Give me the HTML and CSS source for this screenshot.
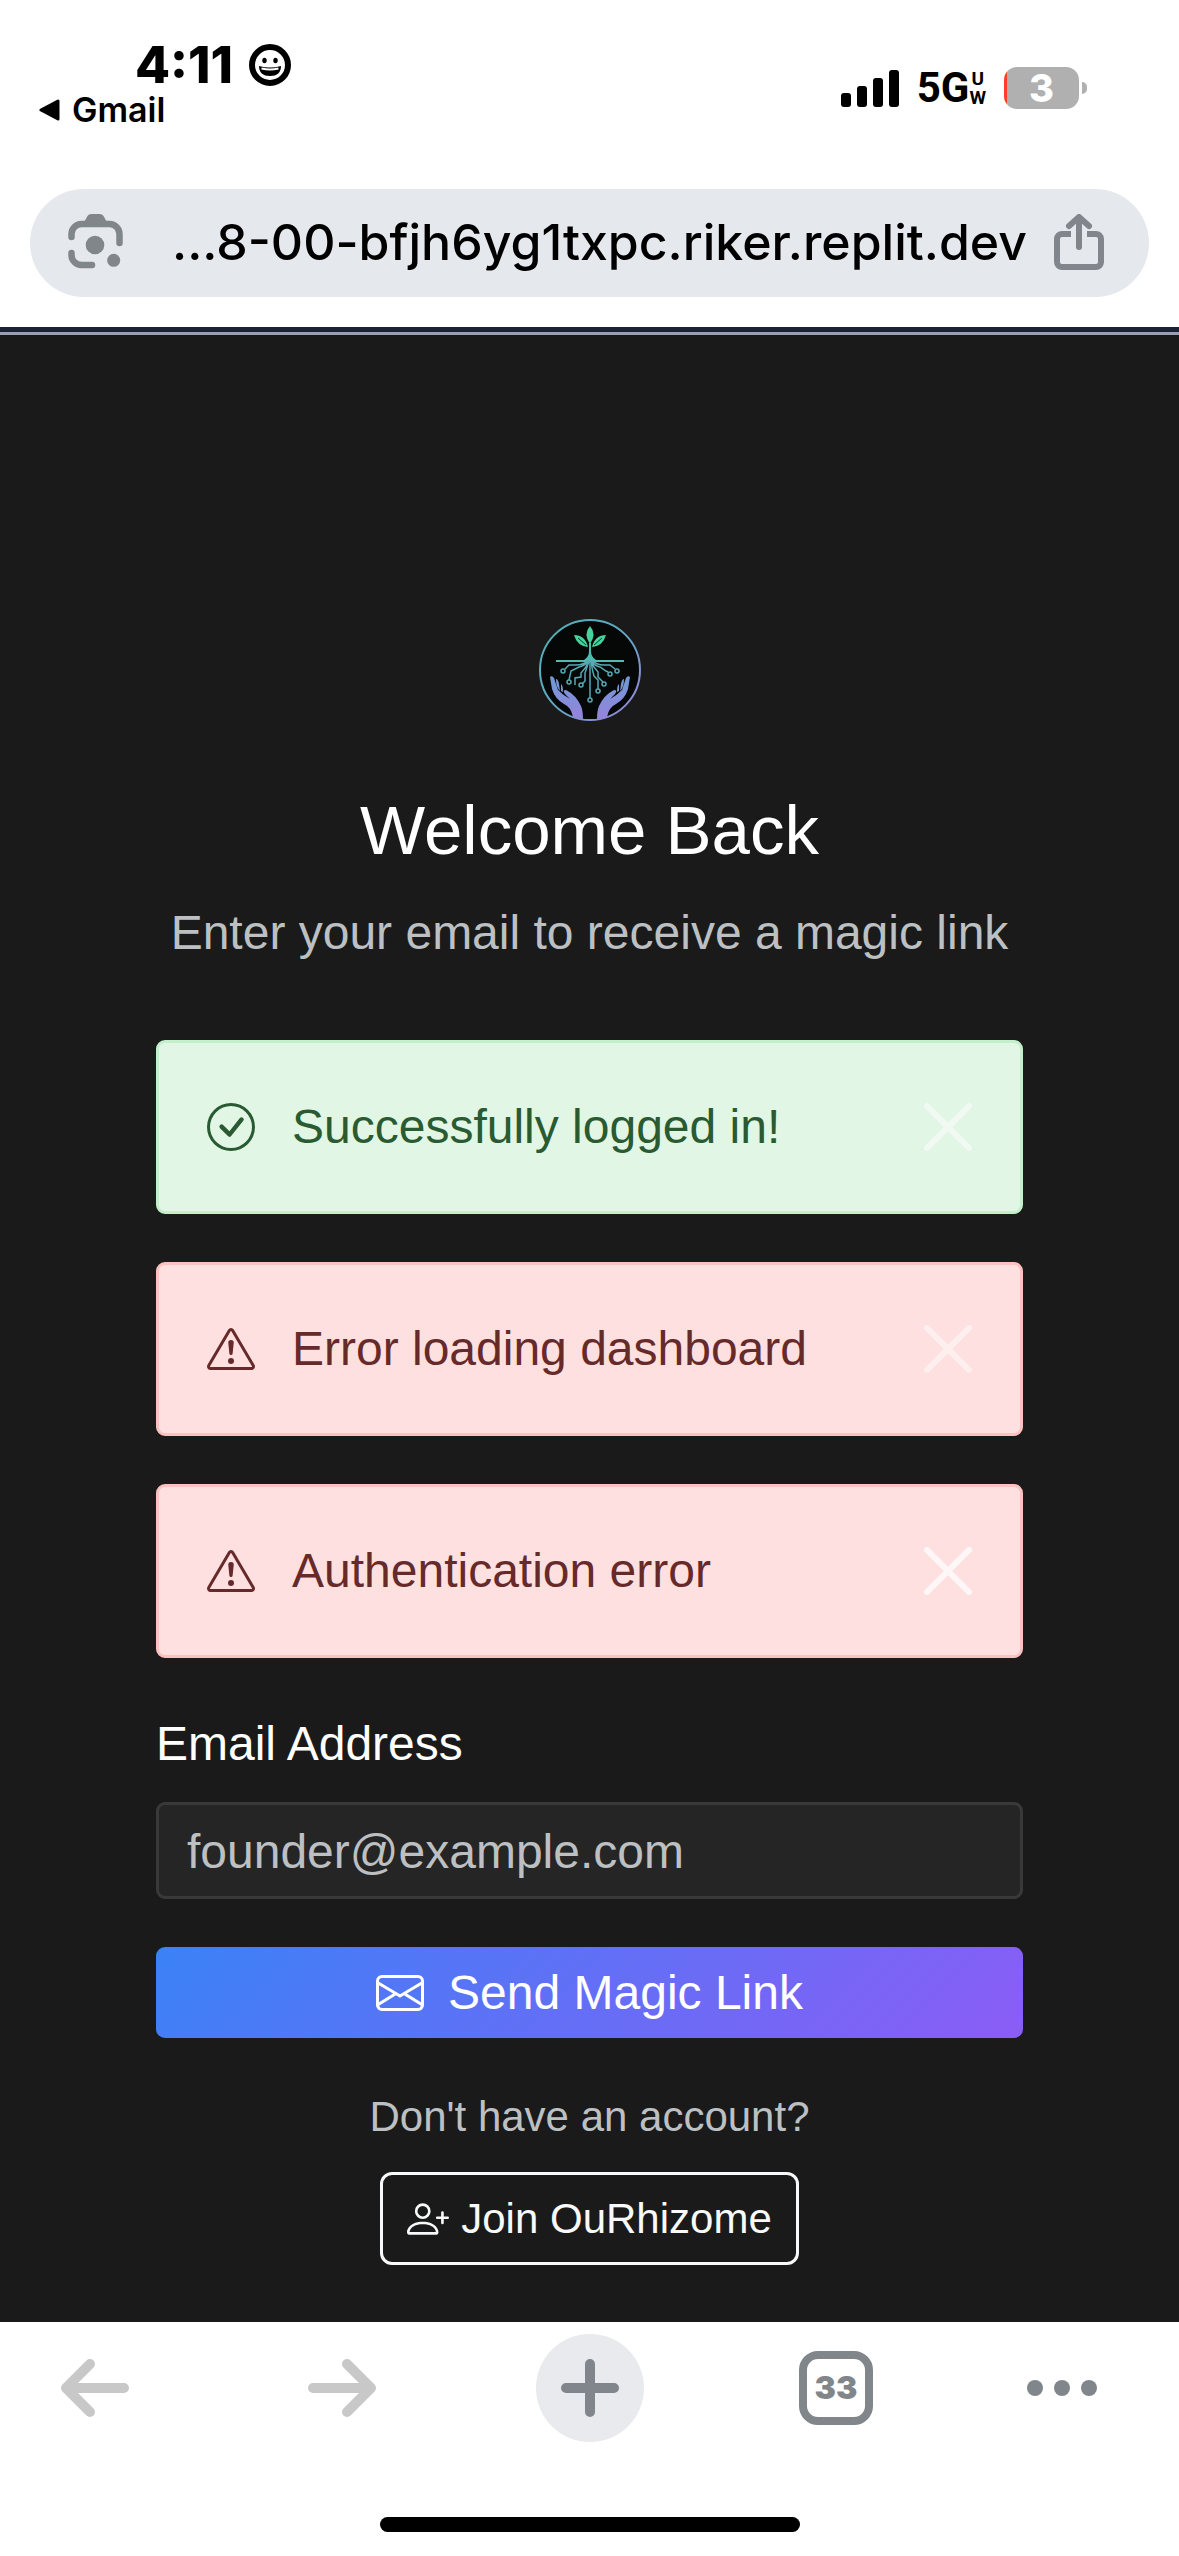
FILE: index.html
```html
<!DOCTYPE html>
<html lang="en">
<head>
<meta charset="utf-8">
<meta name="viewport" content="width=device-width, initial-scale=1">
<title>OuRhizome – Welcome Back</title>
<link rel="stylesheet" href="styles.css">
</head>
<body>
<header class="chrome">
  <div class="status">
    <div class="status-left">
      <div class="clock">
        <time>4:11</time>
        <svg class="focus-icon" viewBox="0 0 42 42" aria-hidden="true">
          <circle cx="21" cy="21" r="18" fill="none" stroke="#000" stroke-width="6"/>
          <ellipse cx="15.500" cy="16.500" rx="2.200" ry="2.800"/>
          <ellipse cx="26.500" cy="16.500" rx="2.200" ry="2.800"/>
          <path d="M10 22q11 3 22 0q0 10-11 10T10 22z"/>
          <path d="M12.500 24.500q8.500 2 17 0" fill="none" stroke="#fff" stroke-width="2"/>
        </svg>
      </div>
      <a class="back-app" href="#gmail">
        <svg class="back-icon" viewBox="0 0 22 22" aria-hidden="true"><path d="M20 2v18L3 11z" stroke="#000" stroke-width="3" stroke-linejoin="round"/></svg>
        Gmail
      </a>
    </div>
    <div class="status-right">
      <svg class="signal" viewBox="0 0 58 38" aria-hidden="true">
        <rect y="24" width="10" height="14" rx="3"/><rect x="16" y="17" width="10" height="21" rx="3"/>
        <rect x="32" y="9" width="10" height="29" rx="3"/><rect x="48" y="1" width="10" height="37" rx="3"/>
      </svg>
      <span class="network">5G<span class="band"><span>U</span><span>W</span></span></span>
      <span class="battery">3</span>
    </div>
  </div>
  <div class="omnibox">
    <button class="icon-button" type="button" aria-label="Search with camera">
      <svg class="tool-icon" viewBox="0 0 56 56" aria-hidden="true">
        <g fill="none" stroke="#80868a" stroke-width="6.500" stroke-linecap="round">
          <path d="M3.500 23v-3a10 10 0 0 1 10-10h28a10 10 0 0 1 10 10v9"/>
          <path d="M3.500 39v2a10 10 0 0 0 10 10h10.500"/>
        </g>
        <g fill="#80868a"><path d="M15 10l4.500-8q1-2 4-2h8q3 0 4 2l4.500 8z"/><circle cx="27" cy="31" r="9.300"/><circle cx="45.700" cy="46.300" r="6.500"/></g>
      </svg>
    </button>
    <span class="url">...8-00-bfjh6yg1txpc.riker.replit.dev</span>
    <button class="icon-button" type="button" aria-label="Share">
      <svg class="tool-icon" viewBox="0 0 56 56" aria-hidden="true">
        <g fill="none" stroke="#80868b" stroke-width="6" stroke-linecap="round" stroke-linejoin="round">
          <path d="M28 33V4M18 12L28 3l10 9"/>
          <path d="M20 20h-9a5 5 0 0 0-5 5v23a5 5 0 0 0 5 5h34a5 5 0 0 0 5-5V25a5 5 0 0 0-5-5h-9" stroke-linecap="butt"/>
        </g>
      </svg>
    </button>
  </div>
</header>

<main class="page">
  <div class="login">
    <svg class="logo" viewBox="0 0 102 102" role="img" aria-label="OuRhizome">
      <defs>
        <linearGradient id="ring" x1="0" y1="0" x2="1" y2="1"><stop offset="0" stop-color="#4fb3b5"/><stop offset=".5" stop-color="#5fa9c4"/><stop offset="1" stop-color="#9d7fdc"/></linearGradient>
        <linearGradient id="hand" x1="0" y1="0" x2="0" y2="1"><stop offset="0" stop-color="#6f9bd6"/><stop offset="1" stop-color="#9583dc"/></linearGradient>
      </defs>
      <circle cx="51" cy="51" r="50" fill="#060707" stroke="url(#ring)" stroke-width="2"/>
      <g fill="#46d29c">
        <path d="M51 7q7 8 0 18q-7-10 0-18z"/>
        <path d="M35 16q11 0 14 12q-11-1-14-12z"/>
        <path d="M67 16q-11 0-14 12q11-1 14-12z"/>
      </g>
      <g fill="none" stroke="#06382b" stroke-width="1"><path d="M39 19l8 7M63 19l-8 7"/></g>
      <g fill="none" stroke="#4dbdb0" stroke-width="2">
        <path d="M51 24v14M17 42h68"/>
      </g>
      <path d="M50 32h2q0 6 5 9H45q5-3 5-9z" fill="#4dbdb0"/>
      <g fill="none" stroke="#56a9b4" stroke-width="1.500">
        <path d="M51 40v39M49 41q-4 5-12 5h-7l-4 4M50 42q-5 5-10 6l-8 4-2 9M50 42q-3 7-8 12v4l-6 1v7M50 42q-2 6-4 12v8l-3 3"/>
        <path d="M53 41q4 5 12 5h6l5 4M52 42q4 5 9 6l6 4 2 1M52 42q2 6 7 11v5l5 5M52 42q1 8 3 15l4 4v9"/>
        <circle cx="24" cy="52" r="2"/><circle cx="30" cy="63" r="2"/><circle cx="42" cy="66" r="2"/><circle cx="51" cy="81" r="2"/>
        <circle cx="59" cy="72" r="2"/><circle cx="65" cy="65" r="2"/><circle cx="71" cy="55" r="2"/><circle cx="78" cy="52" r="2"/>
      </g>
      <g fill="url(#hand)">
        <path d="M11 58q2-2 4 1l4 12q6 6 12 9l-5-5q-3-4 1-4q10 5 15 16q2 5 2 13q-5 0-10-2q-2-10-9-13q-9-5-12-15zM17 60q2 0 3 5l1 7q-4-4-4-12zM22 65q2 1 2 8l-2-1z"/>
        <path d="M91 58q-2-2-4 1l-4 12q-6 6-12 9l5-5q3-4-1-4q-10 5-15 16q-2 5-2 13q5 0 10-2q2-10 9-13q9-5 12-15zM85 60q-2 0-3 5l-1 7q4-4 4-12zM80 65q-2 1-2 8l2-1z"/>
      </g>
    </svg>
    <h1 class="title">Welcome Back</h1>
    <p class="lead">Enter your email to receive a magic link</p>

    <div class="alerts">
      <div class="alert alert-success" role="status">
        <svg class="icon" viewBox="0 0 16 16" fill="currentColor" aria-hidden="true"><path d="M8 15A7 7 0 1 1 8 1a7 7 0 0 1 0 14m0 1A8 8 0 1 0 8 0a8 8 0 0 0 0 16"/><path d="m10.970 4.970-.020.022-3.473 4.425-2.093-2.094a.75.75 0 0 0-1.060 1.060L6.970 11.030a.75.75 0 0 0 1.079-.020l3.992-4.990a.75.75 0 0 0-1.071-1.050"/></svg>
        <span class="alert-text">Successfully logged in!</span>
        <button class="close" type="button" aria-label="Close"><svg class="icon" viewBox="0 0 16 16" fill="#fff" aria-hidden="true"><path d="M.293.293a1 1 0 0 1 1.414 0L8 6.586 14.293.293a1 1 0 1 1 1.414 1.414L9.414 8l6.293 6.293a1 1 0 0 1-1.414 1.414L8 9.414l-6.293 6.293a1 1 0 0 1-1.414-1.414L6.586 8 .293 1.707a1 1 0 0 1 0-1.414z"/></svg></button>
      </div>
      <div class="alert alert-danger" role="alert">
        <svg class="icon" viewBox="0 0 16 16" fill="currentColor" aria-hidden="true"><path d="M7.938 2.016A.13.13 0 0 1 8.002 2a.13.13 0 0 1 .063.016.15.15 0 0 1 .054.057l6.857 11.667c.036.060.035.124.002.183a.2.2 0 0 1-.054.060.1.1 0 0 1-.066.017H1.146a.1.1 0 0 1-.066-.017.2.2 0 0 1-.054-.060.18.18 0 0 1 .002-.183L7.884 2.073a.15.15 0 0 1 .054-.057m1.044-.450a1.130 1.130 0 0 0-1.960 0L.165 13.233c-.457.778.091 1.767.980 1.767h13.713c.889 0 1.438-.990.980-1.767z"/><path d="M7.002 12a1 1 0 1 1 2 0 1 1 0 0 1-2 0M7.100 5.995a.905.905 0 1 1 1.800 0l-.350 3.507a.552.552 0 0 1-1.100 0z"/></svg>
        <span class="alert-text">Error loading dashboard</span>
        <button class="close" type="button" aria-label="Close"><svg class="icon" viewBox="0 0 16 16" fill="#fff" aria-hidden="true"><path d="M.293.293a1 1 0 0 1 1.414 0L8 6.586 14.293.293a1 1 0 1 1 1.414 1.414L9.414 8l6.293 6.293a1 1 0 0 1-1.414 1.414L8 9.414l-6.293 6.293a1 1 0 0 1-1.414-1.414L6.586 8 .293 1.707a1 1 0 0 1 0-1.414z"/></svg></button>
      </div>
      <div class="alert alert-danger" role="alert">
        <svg class="icon" viewBox="0 0 16 16" fill="currentColor" aria-hidden="true"><path d="M7.938 2.016A.13.13 0 0 1 8.002 2a.13.13 0 0 1 .063.016.15.15 0 0 1 .054.057l6.857 11.667c.036.060.035.124.002.183a.2.2 0 0 1-.054.060.1.1 0 0 1-.066.017H1.146a.1.1 0 0 1-.066-.017.2.2 0 0 1-.054-.060.18.18 0 0 1 .002-.183L7.884 2.073a.15.15 0 0 1 .054-.057m1.044-.450a1.130 1.130 0 0 0-1.960 0L.165 13.233c-.457.778.091 1.767.980 1.767h13.713c.889 0 1.438-.990.980-1.767z"/><path d="M7.002 12a1 1 0 1 1 2 0 1 1 0 0 1-2 0M7.100 5.995a.905.905 0 1 1 1.800 0l-.350 3.507a.552.552 0 0 1-1.100 0z"/></svg>
        <span class="alert-text">Authentication error</span>
        <button class="close close-active" type="button" aria-label="Close"><svg class="icon" viewBox="0 0 16 16" fill="#fff" aria-hidden="true"><path d="M.293.293a1 1 0 0 1 1.414 0L8 6.586 14.293.293a1 1 0 1 1 1.414 1.414L9.414 8l6.293 6.293a1 1 0 0 1-1.414 1.414L8 9.414l-6.293 6.293a1 1 0 0 1-1.414-1.414L6.586 8 .293 1.707a1 1 0 0 1 0-1.414z"/></svg></button>
      </div>
    </div>

    <form class="form">
      <label class="label" for="email">Email Address</label>
      <input class="field" id="email" type="email" placeholder="founder@example.com">
      <button class="submit" type="submit">
        <svg class="icon" viewBox="0 0 16 16" fill="currentColor" aria-hidden="true"><path d="M0 4a2 2 0 0 1 2-2h12a2 2 0 0 1 2 2v8a2 2 0 0 1-2 2H2a2 2 0 0 1-2-2zm2-1a1 1 0 0 0-1 1v.217l7 4.200 7-4.200V4a1 1 0 0 0-1-1zm13 2.383-4.708 2.825L15 11.105zm-.034 6.876-5.640-3.471L8 9.583l-1.326-.795-5.640 3.470A1 1 0 0 0 2 13h12a1 1 0 0 0 .966-.741M1 11.105l4.708-2.897L1 5.383z"/></svg>
        Send Magic Link
      </button>
    </form>

    <p class="prompt">Don't have an account?</p>
    <a class="join" href="#join">
      <svg class="join-icon" viewBox="0 0 16 16" fill="currentColor" aria-hidden="true"><path d="M6 8a3 3 0 1 0 0-6 3 3 0 0 0 0 6m2-3a2 2 0 1 1-4 0 2 2 0 0 1 4 0m4 8c0 1-1 1-1 1H1s-1 0-1-1 1-4 6-4 6 3 6 4m-1-.004c-.001-.246-.154-.986-.832-1.664C9.516 10.680 8.289 10 6 10s-3.516.680-4.168 1.332c-.678.678-.830 1.418-.832 1.664z"/><path d="M13.500 5a.5.5 0 0 1 .5.5V7h1.500a.5.5 0 0 1 0 1H14v1.500a.5.5 0 0 1-1 0V8h-1.500a.5.5 0 0 1 0-1H13V5.500a.5.5 0 0 1 .5-.5"/></svg>
      Join OuRhizome
    </a>
  </div>
</main>

<footer class="chrome">
  <nav class="toolbar" aria-label="Browser">
    <button class="tool" type="button" aria-label="Back" disabled><svg class="nav-icon" viewBox="0 0 70 60" aria-hidden="true"><path d="M30 6L6 30l24 24M7 30h57" fill="none" stroke="#c8c8c8" stroke-width="10" stroke-linecap="round" stroke-linejoin="round"/></svg></button>
    <button class="tool" type="button" aria-label="Forward" disabled><svg class="nav-icon" viewBox="0 0 70 60" aria-hidden="true"><path d="M40 6l24 24-24 24M63 30H6" fill="none" stroke="#c8c8c8" stroke-width="10" stroke-linecap="round" stroke-linejoin="round"/></svg></button>
    <button class="tool tool-new" type="button" aria-label="New tab"><svg class="nav-icon" viewBox="0 0 70 60" aria-hidden="true"><path d="M35 6v48M11 30h48" fill="none" stroke="#80868b" stroke-width="10" stroke-linecap="round"/></svg></button>
    <button class="tool" type="button" aria-label="33 open tabs"><span class="tabs">33</span></button>
    <button class="tool" type="button" aria-label="More"><svg class="nav-icon" viewBox="0 0 70 60" aria-hidden="true"><g fill="#80868b"><circle cx="8" cy="30" r="8"/><circle cx="35" cy="30" r="8"/><circle cx="62" cy="30" r="8"/></g></svg></button>
  </nav>
  <div class="home-bar"></div>
</footer>
</body>
</html>
```
FILE: styles.css
```css
* { box-sizing: border-box; }

body {
  margin: 0;
  min-height: 100vh;
  display: flex;
  flex-direction: column;
  background: #1a1a1a;
  font-family: "Liberation Sans", Arial, sans-serif;
}

button { padding: 0; border: 0; background: none; font: inherit; color: inherit; }
svg { display: block; flex: none; }

/* Browser chrome */
.chrome { background: #fff; color: #000; font-family: Inter, sans-serif; }
header.chrome { padding-bottom: 30px; }

.status {
  display: flex;
  justify-content: space-between;
  align-items: flex-start;
  padding: 40px 100px 0 38px;
}
.clock {
  display: flex;
  align-items: center;
  gap: 16px;
  padding-left: 97px;
  font-size: 51px;
  font-weight: 800;
  line-height: 50px;
}
.focus-icon { width: 42px; height: 42px; }
.back-app {
  display: flex;
  align-items: center;
  gap: 12px;
  color: inherit;
  font-size: 34px;
  font-weight: 600;
  line-height: 40px;
  text-decoration: none;
}
.back-icon { width: 22px; height: 22px; }

.status-right { display: flex; align-items: center; height: 42px; margin-top: 27px; }
.signal { width: 58px; height: 38px; }
.network {
  display: flex;
  align-items: center;
  margin-left: 18px;
  font-family: Roboto, sans-serif;
  font-size: 42px;
  font-weight: 700;
  line-height: 42px;
}
.band { display: flex; flex-direction: column; align-items: center; font-size: 19px; line-height: 19px; }
.battery {
  position: relative;
  width: 75px;
  margin-left: 18px;
  border-radius: 13px;
  background: linear-gradient(90deg, #ff3b30 3px, #b0b0b0 3px);
  color: #fff;
  font-size: 38px;
  font-weight: 800;
  line-height: 42px;
  text-align: center;
}
.battery::after {
  content: "";
  position: absolute;
  top: 15px;
  right: -8px;
  width: 5px;
  height: 12px;
  border-radius: 0 6px 6px 0;
  background: #b0b0b0;
}

.omnibox {
  display: flex;
  align-items: center;
  height: 108px;
  margin: 59px 30px 0;
  padding: 0 42px 2px 38px;
  border-radius: 54px;
  background: #e5e8ec;
}
.tool-icon { width: 56px; height: 56px; }
.url {
  flex: 1;
  padding-right: 24px;
  font-size: 50px;
  font-weight: 500;
  line-height: 60px;
  text-align: right;
  white-space: nowrap;
}

/* Login page */
.page {
  flex: 1;
  border-top: 5px solid #1b2233;
  box-shadow: inset 0 3px #9aa0b6;
  padding: 287px 156px 55px;
}
.login { display: flex; flex-direction: column; align-items: center; }
.logo { width: 102px; height: 102px; }
.title { margin: 68px 0 0; color: #fff; font-size: 69px; font-weight: 400; line-height: 84px; }
.lead { margin: 24px 0 0; color: #bdc0c3; font-size: 48px; line-height: 72px; }

.alerts { display: flex; flex-direction: column; gap: 48px; width: 100%; margin-top: 71px; }
.alert {
  display: flex;
  align-items: center;
  padding: 48px;
  border: 3px solid;
  border-radius: 9px;
  font-size: 48px;
  line-height: 72px;
}
.alert-success { background: #e1f6e5; border-color: #c3f0cb; color: #2a5a32; }
.alert-danger { background: #fee0e0; border-color: #fec1c1; color: #662a2a; }
.icon { width: 48px; height: 48px; }
.alert-text { flex: 1; margin-left: 37px; }
.close { opacity: .5; }
.close-active { opacity: .75; }

.form { display: flex; flex-direction: column; width: 100%; margin-top: 50px; }
.label { color: #fff; font-size: 48px; line-height: 72px; }
.field {
  width: 100%;
  height: 97px;
  margin-top: 22px;
  padding: 2px 28px 0;
  border: 3px solid #393939;
  border-radius: 9px;
  background: #252525;
  color: #fff;
  font: 48px "Liberation Sans", Arial, sans-serif;
}
.field::placeholder { color: #bdc0c3; opacity: 1; }
.submit {
  display: flex;
  align-items: center;
  justify-content: center;
  gap: 24px;
  height: 91px;
  margin-top: 48px;
  border-radius: 9px;
  background: linear-gradient(135deg, #3b82f6, #8b5cf6);
  color: #fff;
  font-size: 48px;
}
.prompt { margin: 48px 0 0; color: #bdc0c3; font-size: 42px; line-height: 62px; }
.join {
  display: flex;
  align-items: center;
  gap: 12px;
  margin-top: 24px;
  padding: 12px 24px;
  border: 3px solid #f8f9fa;
  border-radius: 12px;
  color: #f8f9fa;
  font-size: 42px;
  line-height: 63px;
  text-decoration: none;
}
.join-icon { width: 42px; height: 42px; }

/* Bottom toolbar */
.toolbar {
  display: grid;
  grid-template-columns: 247fr 248fr 246fr 226fr 108px;
  padding: 12px 63px 0 41px;
}
.tool { display: flex; align-items: center; justify-content: center; width: 108px; height: 108px; border-radius: 50%; }
.tool-new { background: #e8eaed; }
.nav-icon { width: 70px; height: 60px; }
.tabs {
  width: 74px;
  border: 8px solid #80868a;
  border-radius: 19px;
  color: #80868a;
  font-size: 32px;
  font-weight: 900;
  line-height: 58px;
  text-align: center;
}
.home-bar { width: 420px; height: 15px; margin: 75px auto 24px; border-radius: 8px; background: #000; }
```
